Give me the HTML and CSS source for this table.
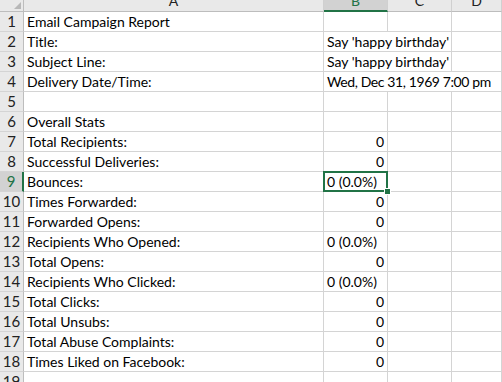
FILE: index.html
```html
<!DOCTYPE html>
<html>
<head>
    <title>Email Campaign Report</title>
    <link rel="stylesheet" href="styles.css">
</head>
<body>
    <div class="sheet">
        <div class="row head">
            <div class="rh corner"><span class="tri"></span></div>
            <div class="ch">A</div>
            <div class="ch active">B</div>
            <div class="ch">C</div>
            <div class="ch">D</div>
        </div>

        <div class="row"><div class="rh">1</div><div class="c">Email Campaign Report</div><div class="c"></div><div class="c"></div><div class="c"></div></div>
        <div class="row"><div class="rh">2</div><div class="c">Title:</div><div class="c span2">Say 'happy birthday'</div><div class="c"></div></div>
        <div class="row"><div class="rh">3</div><div class="c">Subject Line:</div><div class="c span2">Say 'happy birthday'</div><div class="c"></div></div>
        <div class="row"><div class="rh">4</div><div class="c">Delivery Date/Time:</div><div class="c span3 date">Wed, Dec 31, 1969 7:00 pm</div></div>
        <div class="row"><div class="rh">5</div><div class="c"></div><div class="c"></div><div class="c"></div><div class="c"></div></div>
        <div class="row"><div class="rh">6</div><div class="c">Overall Stats</div><div class="c"></div><div class="c"></div><div class="c"></div></div>
        <div class="row"><div class="rh">7</div><div class="c">Total Recipients:</div><div class="c num">0</div><div class="c"></div><div class="c"></div></div>
        <div class="row"><div class="rh">8</div><div class="c">Successful Deliveries:</div><div class="c num">0</div><div class="c"></div><div class="c"></div></div>
        <div class="row"><div class="rh active">9</div><div class="c">Bounces:</div><div class="c selected">0 (0.0%)<span class="handle"></span></div><div class="c"></div><div class="c"></div></div>
        <div class="row"><div class="rh">10</div><div class="c">Times Forwarded:</div><div class="c num">0</div><div class="c"></div><div class="c"></div></div>
        <div class="row"><div class="rh">11</div><div class="c">Forwarded Opens:</div><div class="c num">0</div><div class="c"></div><div class="c"></div></div>
        <div class="row"><div class="rh">12</div><div class="c">Recipients Who Opened:</div><div class="c">0 (0.0%)</div><div class="c"></div><div class="c"></div></div>
        <div class="row"><div class="rh">13</div><div class="c">Total Opens:</div><div class="c num">0</div><div class="c"></div><div class="c"></div></div>
        <div class="row"><div class="rh">14</div><div class="c">Recipients Who Clicked:</div><div class="c">0 (0.0%)</div><div class="c"></div><div class="c"></div></div>
        <div class="row"><div class="rh">15</div><div class="c">Total Clicks:</div><div class="c num">0</div><div class="c"></div><div class="c"></div></div>
        <div class="row"><div class="rh">16</div><div class="c">Total Unsubs:</div><div class="c num">0</div><div class="c"></div><div class="c"></div></div>
        <div class="row"><div class="rh">17</div><div class="c">Total Abuse Complaints:</div><div class="c num">0</div><div class="c"></div><div class="c"></div></div>
        <div class="row"><div class="rh">18</div><div class="c">Times Liked on Facebook:</div><div class="c num">0</div><div class="c"></div><div class="c"></div></div>
        <div class="row"><div class="rh">19</div><div class="c"></div><div class="c"></div><div class="c"></div><div class="c"></div></div>
    </div>
</body>
</html>
```

FILE: styles.css
```css
html, body { margin: 0; background: #fff; overflow: hidden; }
body { width: 502px; height: 382px; font-family: Lato, "Open Sans", sans-serif; color: #000; }

.sheet { margin-top: -8px; }
.row { display: grid; grid-template-columns: 24px 300px 64px 64px 1fr; height: 20px; }
.row > div { box-sizing: border-box; height: 20px; line-height: 19px; white-space: nowrap; overflow: visible; }

/* row numbers and column letters */
.rh { background: #e9e9e9; border-right: 1px solid #bdbdbd; border-bottom: 1px solid #d4d4d4; text-align: center; font-size: 15px; color: #222; }
.rh.active { background: #d2d2d2; color: #217346; border-right: 2px solid #217346; }
.ch { background: #e9e9e9; border-right: 1px solid #d0d0d0; border-bottom: 1px solid #bdbdbd; text-align: center; font-size: 14px; color: #222; line-height: 17px !important; }
.ch.active { background: #d2d2d2; color: #217346; border-bottom: 2px solid #217346; }
.corner { position: relative; border-bottom-color: #bdbdbd; }
.tri { position: absolute; right: 2px; bottom: 2px; width: 0; height: 0; border-left: 7px solid transparent; border-bottom: 7px solid #b8b8b8; }

/* cells */
.c { border-right: 1px solid #d4d4d4; border-bottom: 1px solid #d4d4d4; padding-left: 3px; font-size: 14px; }
.c.num { text-align: right; padding-right: 3px; }
.c.date { letter-spacing: -0.4px; }
.span2 { grid-column: span 2; }
.span3 { grid-column: span 3; }

.selected { position: relative; }
.selected::after { content: ""; position: absolute; left: -1px; top: -1px; right: -1px; bottom: -1px; border: 2px solid #217346; }
.handle { position: absolute; right: -4px; bottom: -4px; width: 5px; height: 5px; background: #217346; border: 1px solid #fff; z-index: 1; }
```
